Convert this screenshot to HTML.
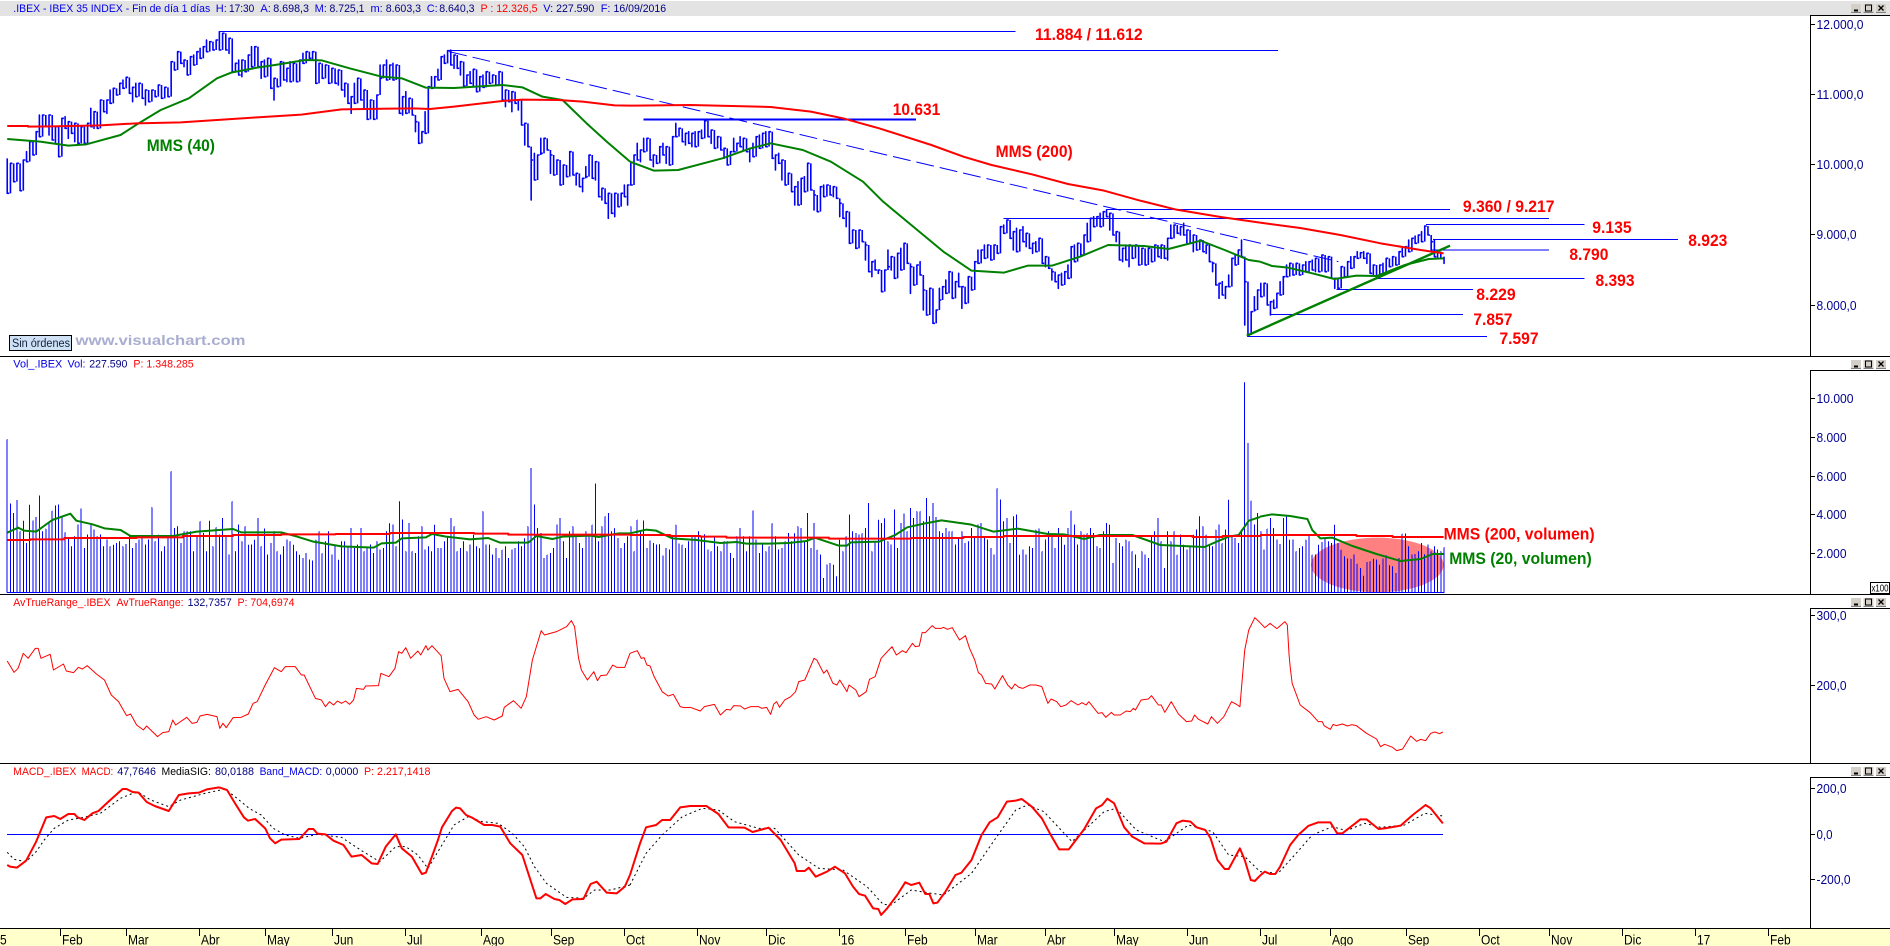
<!DOCTYPE html>
<html><head><meta charset="utf-8"><title>IBEX 35</title>
<style>
html,body{margin:0;padding:0;background:#fff}
svg{display:block}
path,polyline{fill:none;vector-effect:non-scaling-stroke;stroke-linejoin:round}
text{font-family:"Liberation Sans",Arial,sans-serif}
.t text,text.t{font-size:11px}
.b{fill:#0000e8}.n{fill:#000080}.r{fill:#ff0000}.k{fill:#000}
.a text{font-size:17px;font-weight:bold}
.x text{font-size:13px;fill:#000090}
.d text{font-size:12px;fill:#000}
</style></head><body>
<svg xmlns="http://www.w3.org/2000/svg" width="1890" height="946" viewBox="0 0 1890 946">
<defs>
<g id="btn">
<rect x="0" y="0" width="10" height="9" fill="#d4d0c8"/><path d="M0 8.5H10" stroke="#808080"/><path d="M3 6.5H7" stroke="#000" stroke-width="2"/>
<rect x="12.5" y="0" width="10" height="9" fill="#d4d0c8"/><path d="M12.5 8.5H22.5" stroke="#808080"/><rect x="14.5" y="1" width="6" height="6" fill="none" stroke="#000"/>
<rect x="25" y="0" width="10" height="9" fill="#d4d0c8"/><path d="M25 8.5H35" stroke="#808080"/><path d="M27.5 1.5L32.5 6.5M32.5 1.5L27.5 6.5" stroke="#000" stroke-width="1.3"/>
</g>
</defs>
<rect width="1890" height="946" fill="#fff"/>
<rect x="0" y="1" width="1890" height="15" fill="#e3e3e3"/>
<rect x="1811" y="16" width="79" height="340" fill="#fff"/>

<!-- PRICE PANE -->
<g transform="scale(.40179,.33333)">
<path stroke="#00f" stroke-width="1.6" d="M18 475V475 580h5m3 0V570 490h5m3 0V490 545h5m3 0V545 490h5m3 0V490 572h5m3 0V520 480h5m3 0V455 485h5m3 0V465 425h5m3 0V425 465h5m3 0V425 395h5m3 0V345 410h5m3 0V400 345h5m3 0V345 380h5m3 0V405 345h5m3 0V370 420h5m3 0V430 380h5m3 0V400 470h5m3 0V410 355h5m3 0V350 385h5m3 0V415 365h5m3 0V370 400h5m3 0V425 370h5m3 0V390 430h5m3 0V430 380h5m3 0V380 430h5m3 0V400 370h5m3 0V325 380h5m3 0V385 335h5m3 0V345 385h5m3 0V345 300h5m3 0V300 335h5m3 0V340 300h5m3 0V270 310h5m3 0V290 265h5m3 0V270 285h5m3 0V280 250h5m3 0V240 265h5m3 0V260 232h5m3 0V240 280h5m3 0V305 262h5m3 0V250 290h5m3 0V270 250h5m3 0V265 295h5m3 0V315 270h5m3 0V270 305h5m3 0V295 270h5m3 0V270 290h5m3 0V280 255h5m3 0V255 295h5m3 0V295 262h5m3 0V265 290h5m3 0V265 185h5m3 0V185 210h5m3 0V210 155h5m3 0V155 190h5m3 0V200 180h5m3 0V180 225h5m3 0V200 170h5m3 0V165 195h5m3 0V190 155h5m3 0V145 175h5m3 0V150 140h5m3 0V120 155h5m3 0V155 125h5m3 0V125 150h5m3 0V145 120h5m3 0V95 150h5m3 0V150 100h5m3 0V110 150h5m3 0V160 115h5m3 0V155 215h5m3 0V215 190h5m3 0V180 225h5m3 0V230 180h5m3 0V180 215h5m3 0V205 165h5m3 0V140 200h5m3 0V175 140h5m3 0V145 200h5m3 0V235 185h5m3 0V180 230h5m3 0V230 175h5m3 0V235 265h5m3 0V300 235h5m3 0V240 260h5m3 0V245 185h5m3 0V195 240h5m3 0V245 205h5m3 0V185 245h5m3 0V240 190h5m3 0V190 245h5m3 0V245 180h5m3 0V160 190h5m3 0V190 155h5m3 0V155 175h5m3 0V180 155h5m3 0V210 250h5m3 0V250 190h5m3 0V195 235h5m3 0V230 195h5m3 0V210 250h5m3 0V250 205h5m3 0V205 250h5m3 0V255 210h5m3 0V220 270h5m3 0V290 250h5m3 0V265 310h5m3 0V340 290h5m3 0V250 310h5m3 0V290 235h5m3 0V250 300h5m3 0V325 270h5m3 0V295 358h5m3 0V325 300h5m3 0V300 358h5m3 0V320 285h5m3 0V195 235h5m3 0V235 195h5m3 0V180 240h5m3 0V230 195h5m3 0V190 240h5m3 0V235 195h5m3 0V240 340h5m3 0V345 290h5m3 0V275 340h5m3 0V340 295h5m3 0V320 345h5m3 0V395 365h5m3 0V370 430h5m3 0V430 395h5m3 0V335 400h5m3 0V305 260h5m3 0V230 265h5m3 0V255 230h5m3 0V208 240h5m3 0V205 170h5m3 0V165 190h5m3 0V190 152h5m3 0V150 195h5m3 0V205 165h5m3 0V170 205h5m3 0V225 185h5m3 0V225 258h5m3 0V255 225h5m3 0V215 250h5m3 0V260 208h5m3 0V240 275h5m3 0V262 230h5m3 0V225 262h5m3 0V255 215h5m3 0V215 250h5m3 0V250 225h5m3 0V230 255h5m3 0V255 215h5m3 0V225 300h5m3 0V320 270h5m3 0V275 305h5m3 0V335 275h5m3 0V285 310h5m3 0V330 300h5m3 0V320 375h5m3 0V435 370h5m3 0V435 440h5m3 0V600 480h5m3 0V460 540h5m3 0V520 465h5m3 0V415 460h5m3 0V445 415h5m3 0V430 450h5m3 0V520 465h5m3 0V475 525h5m3 0V510 480h5m3 0V505 555h5m3 0V540 495h5m3 0V495 530h5m3 0V490 455h5m3 0V490 525h5m3 0V555 520h5m3 0V530 560h5m3 0V575 535h5m3 0V500 530h5m3 0V505 465h5m3 0V480 535h5m3 0V540 485h5m3 0V520 590h5m3 0V600 565h5m3 0V590 610h5m3 0V655 580h5m3 0V580 640h5m3 0V650 580h5m3 0V590 620h5m3 0V600 580h5m3 0V555 590h5m3 0V615 555h5m3 0V490 555h5m3 0V520 465h5m3 0V430 480h5m3 0V485 450h5m3 0V415 455h5m3 0V450 415h5m3 0V440 480h5m3 0V500 465h5m3 0V465 490h5m3 0V470 440h5m3 0V430 465h5m3 0V490 440h5m3 0V455 495h5m3 0V475 410h5m3 0V370 410h5m3 0V410 385h5m3 0V395 425h5m3 0V435 400h5m3 0V395 430h5m3 0V440 400h5m3 0V395 440h5m3 0V420 395h5m3 0V390 415h5m3 0V400 362h5m3 0V385 410h5m3 0V430 390h5m3 0V410 445h5m3 0V440 410h5m3 0V410 450h5m3 0V475 445h5m3 0V450 495h5m3 0V490 455h5m3 0V415 455h5m3 0V450 430h5m3 0V410 440h5m3 0V450 415h5m3 0V430 455h5m3 0V485 445h5m3 0V430 470h5m3 0V460 410h5m3 0V405 445h5m3 0V435 400h5m3 0V395 440h5m3 0V430 395h5m3 0V395 475h5m3 0V510 465h5m3 0V460 490h5m3 0V540 480h5m3 0V510 555h5m3 0V555 520h5m3 0V535 575h5m3 0V615 560h5m3 0V545 615h5m3 0V570 535h5m3 0V530 575h5m3 0V550 490h5m3 0V550 570h5m3 0V630 585h5m3 0V605 635h5m3 0V600 560h5m3 0V555 590h5m3 0V580 555h5m3 0V560 585h5m3 0V590 560h5m3 0V575 595h5m3 0V650 610h5m3 0V625 655h5m3 0V680 635h5m3 0V680 730h5m3 0V730 690h5m3 0V700 745h5m3 0V735 690h5m3 0V690 725h5m3 0V780 735h5m3 0V745 815h5m3 0V830 785h5m3 0V780 810h5m3 0V820 810h5m3 0V820 875h5m3 0V860 810h5m3 0V750 800h5m3 0V810 770h5m3 0V770 835h5m3 0V820 760h5m3 0V745 810h5m3 0V775 730h5m3 0V745 790h5m3 0V880 800h5m3 0V815 855h5m3 0V840 795h5m3 0V785 825h5m3 0V930 870h5m3 0V875 945h5m3 0V900 865h5m3 0V905 970h5m3 0V970 930h5m3 0V865 900h5m3 0V900 860h5m3 0V840 880h5m3 0V860 815h5m3 0V845 895h5m3 0V865 845h5m3 0V820 860h5m3 0V925 860h5m3 0V860 910h5m3 0V870 830h5m3 0V830 870h5m3 0V830 785h5m3 0V750 790h5m3 0V775 750h5m3 0V735 775h5m3 0V775 735h5m3 0V740 780h5m3 0V775 735h5m3 0V735 760h5m3 0V725 680h5m3 0V675 700h5m3 0V690 660h5m3 0V695 715h5m3 0V750 695h5m3 0V685 755h5m3 0V720 690h5m3 0V680 725h5m3 0V740 700h5m3 0V705 745h5m3 0V760 730h5m3 0V725 755h5m3 0V755 715h5m3 0V760 790h5m3 0V800 770h5m3 0V770 805h5m3 0V840 815h5m3 0V825 845h5m3 0V865 825h5m3 0V820 855h5m3 0V845 815h5m3 0V795 835h5m3 0V795 740h5m3 0V735 785h5m3 0V765 730h5m3 0V730 765h5m3 0V755 705h5m3 0V670 725h5m3 0V685 655h5m3 0V650 680h5m3 0V680 650h5m3 0V640 680h5m3 0V665 635h5m3 0V630 650h5m3 0V690 640h5m3 0V680 705h5m3 0V725 695h5m3 0V700 780h5m3 0V785 745h5m3 0V735 780h5m3 0V800 735h5m3 0V745 775h5m3 0V775 735h5m3 0V745 795h5m3 0V795 745h5m3 0V750 795h5m3 0V795 745h5m3 0V745 785h5m3 0V780 735h5m3 0V740 770h5m3 0V775 735h5m3 0V745 775h5m3 0V780 715h5m3 0V675 715h5m3 0V710 675h5m3 0V675 700h5m3 0V705 680h5m3 0V670 705h5m3 0V730 690h5m3 0V695 730h5m3 0V755 705h5m3 0V710 750h5m3 0V745 720h5m3 0V735 755h5m3 0V760 735h5m3 0V755 785h5m3 0V815 790h5m3 0V825 855h5m3 0V895 850h5m3 0V845 885h5m3 0V895 860h5m3 0V825 860h5m3 0V795 775h5m3 0V765 795h5m3 0V790 750h5m3 0V720 770h5m3 0V975 845h5m3 0V955 1005h5m3 0V980 935h5m3 0V890 930h5m3 0V920 870h5m3 0V850 890h5m3 0V865 850h5m3 0V870 915h5m3 0V945 905h5m3 0V900 925h5m3 0V925 880h5m3 0V845 885h5m3 0V855 830h5m3 0V795 830h5m3 0V825 790h5m3 0V795 825h5m3 0V825 790h5m3 0V790 825h5m3 0V825 795h5m3 0V785 815h5m3 0V810 785h5m3 0V780 810h5m3 0V815 775h5m3 0V790 815h5m3 0V800 765h5m3 0V775 815h5m3 0V815 770h5m3 0V770 835h5m3 0V865 835h5m3 0V840 865h5m3 0V860 800h5m3 0V800 830h5m3 0V810 785h5m3 0V770 805h5m3 0V795 770h5m3 0V755 775h5m3 0V770 758h5m3 0V755 775h5m3 0V790 760h5m3 0V790 820h5m3 0V825 795h5m3 0V810 835h5m3 0V830 795h5m3 0V790 825h5m3 0V815 775h5m3 0V780 800h5m3 0V800 770h5m3 0V770 795h5m3 0V785 755h5m3 0V745 770h5m3 0V760 740h5m3 0V720 755h5m3 0V745 715h5m3 0V708 730h5m3 0V730 705h5m3 0V695 725h5m3 0V695 678h5m3 0V690 705h5m3 0V755 725h5m3 0V720 770h5m3 0V775 755h5m3 0V760 775h5m3 0V790 770"/>
<path stroke="#00f" stroke-width="1" shape-rendering="crispEdges" d="M548 94H2528M1118 151H3181M2753 628H3609M2498 655H3855M3549 673H3944M3566 718H4176M3561 750H3855M3426 835H3944M3326 868H3666M3161 943H3641M3103 1009H3701"/>
<path stroke="#00f" stroke-width="2" shape-rendering="crispEdges" d="M1601 359H2280"/>
<path stroke="#00f" stroke-width="1" stroke-dasharray="18 6" d="M1118 155L3331 785"/>
<path stroke="#008000" stroke-width="2.4" d="M3103 1007L3609 737"/>
<path stroke="#008000" stroke-width="2" d="M18 417L100 425 170 437 215 433 300 405 345 370 400 330 470 295 540 235 575 218 640 203 690 194 760 180 800 181 870 205 950 230 1000 235 1060 263 1130 264 1250 255 1300 262 1350 290 1400 300 1460 370 1510 425 1568 485"/>
<path transform="translate(1568 0)" stroke="#008000" stroke-width="2" d="M0 485L60 512 120 510 230 475 300 445 350 430 430 450 500 485 580 545 630 605 700 675 780 755 850 812 930 818 990 797 1050 797 1120 770 1190 735 1280 738 1340 747 1420 722 1480 750 1540 780 1568 785"/>
<path transform="translate(3136 0)" stroke="#008000" stroke-width="2" d="M0 785L30 798 70 803 130 820 185 837 240 827 290 828 360 795 420 777 457 775"/>
<path stroke="#f00" stroke-width="2" d="M18 378L70 378 70 380 130 379 250 376 340 370 450 367 540 360 640 352 750 344 850 328 1030 325 1070 327 1130 320 1250 303 1300 299 1390 300 1450 305 1530 316 1568 317"/>
<path transform="translate(1568 0)" stroke="#f00" stroke-width="2" d="M0 317L150 315 350 321 450 335 530 355 620 385 750 435 830 470 900 495 1000 523 1090 552 1180 572 1270 602 1360 629 1470 651 1568 668"/>
<path transform="translate(3136 0)" stroke="#f00" stroke-width="2" d="M0 668L100 684 200 705 300 730 400 750 457 760"/>
</g>

<!-- VOLUME PANE -->
<g transform="translate(0,355) scale(.40179,.33333)">
<ellipse transform="translate(3136 0)" cx="292" cy="630" rx="165" ry="82" fill="#ff8080"/>
<path stroke="#00f" stroke-width="1" shape-rendering="crispEdges" d="M18 713V253 713h8V447 713h8V475 713h8V436 713h8V530 713h8V498 713h8V565 713h8V450 713h8V498 713h8V487 713h8V423 713h8V530 713h8V522 713h8V500 713h8V468 713h8V453 713h8V450 713h8V485 713h8V533 713h8V550 713h8V575 713h8V545 713h8V510 713h8V462 713h8V580 713h8V540 713h8V510 713h8V525 713h8V545 713h8V540 713h8V575 713h8V555 713h8V575 713h8V570 713h8V565 713h8V560 713h8V575 713h8V568 713h8V540 713h8V580 713h8V565 713h8V555 713h8V545 713h8V570 713h8V555 713h8V458 713h8V560 713h8V540 713h8V590 713h8V575 713h8V545 713h8V350 713h8V520 713h8V515 713h8V565 713h8V530 713h8V530 713h8V530 713h8V590 713h8V545 713h8V500 713h8V535 713h8V590 713h8V498 713h8V575 713h8V518 713h8V540 713h8V490 713h8V545 713h8V600 713h8V440 713h8V590 713h8V510 713h8V560 713h8V515 713h8V570 713h8V570 713h8V555 713h8V490 713h8V575 713h8V522 713h8V600 713h8V565 713h8V530 713h8V590 713h8V600 713h8V575 713h8V555 713h8V560 713h8V570 713h8V590 713h8V600 713h8V610 713h8V595 713h8V615 713h8V618 713h8V555 713h8V530 713h8V595 713h8V560 713h8V530 713h8V600 713h8V570 713h8V615 713h8V560 713h8V560 713h8V575 713h8V520 713h8V580 713h8V570 713h8V520 713h8V590 713h8V580 713h8V570 713h8V595 713h8V560 713h8V585 713h8V580 713h8V530 713h8V505 713h8V510 713h8V575 713h8V440 713h8V495 713h8V590 713h8V505 713h8V590 713h8V595 713h8V545 713h8V515 713h8V585 713h8V575 713h8V590 713h8V510 713h8V580 713h8V580 713h8V560 713h8V545 713h8V490 713h8V515 713h8V590 713h8V580 713h8V560 713h8V590 713h8V570 713h8V540 713h8V575 713h8V580 713h8V470 713h8V570 713h8V570 713h8V600 713h8V580 713h8V610 713h8V585 713h8V575 713h8V610 713h8V585 713h8V580 713h8V560 713h8V575 713h8V550 713h8V515 713h8V340 713h8V450 713h8V520 713h8V535 713h8V610 713h8V600 713h8V595 713h8V580 713h8V510 713h8V490 713h8V560 713h8V610 713h8V530 713h8V515 713h8V545 713h8V565 713h8V580 713h8V530 713h8V545 713h8V510 713h8V387 713h8V560 713h8V515 713h8V485 713h8V475 713h8V530 713h8V520 713h8V550 713h8V580 713h8V565 713h8V545 713h8V515 713h8V590 713h8V495 713h8V530 713h8V498 713h8V580 713h8V558 713h8V565 713h8V570 713h8V568 713h8V603 713h8V580 713h8V585 713h8V545 713h8V510 713h8V567 713h8V570 713h8V580 713h8V560 713h8V545 713h8V545 713h8V530 713h8V545 713h8V538 713h8V585 713h8V590 713h8V545 713h8V575 713h8V590 713h8V560 713h8V560 713h8V595 713h8V610 713h8V545 713h8V520 713h8V545 713h8V590 713h8V545 713h8V468 713h8V555 713h8V595 713h8V565 713h8V590 713h8V575 713h8V505 713h8V545 713h8V585 713h8V580 713h8V560 713h8V535 713h8V560 713h8V535 713h8V515 713h8V520 713h8V560 713h8V475 713h8V580 713h8V505 713h8V585 713h8V600 713h8V670 713h8V630 713h8V625 713h8V630 713h8V665 713h8V555 713h8V590 713h8V545 713h8V480 713h8V530 713h8V535 713h8V540 713h8V535 713h8V520 713h8V445 713h8V590 713h8V560 713h8V495 713h8V505 713h8V490 713h8V560 713h8V570 713h8V465 713h8V580 713h8V505 713h8V477 713h8V530 713h8V460 713h8V490 713h8V470 713h8V470 713h8V500 713h8V430 713h8V485 713h8V445 713h8V487 713h8V530 713h8V535 713h8V520 713h8V530 713h8V530 713h8V570 713h8V550 713h8V530 713h8V565 713h8V560 713h8V520 713h8V545 713h8V510 713h8V505 713h8V550 713h8V555 713h8V580 713h8V600 713h8V400 713h8V435 713h8V500 713h8V490 713h8V565 713h8V485 713h8V480 713h8V600 713h8V585 713h8V600 713h8V575 713h8V580 713h8V525 713h8V522 713h8V590 713h8V555 713h8V530 713h8V540 713h8V580 713h8V520 713h8V540 713h8V570 713h8V520 713h8V468 713h8V510 713h8V570 713h8V530 713h8V540 713h8V535 713h8V520 713h8V535 713h8V575 713h8V580 713h8V530 713h8V505 713h8V510 713h8V625 713h8V550 713h8V565 713h8V575 713h8V555 713h8V560 713h8V590 713h8V600 713h8V640 713h8V590 713h8V600 713h8V610 713h8V545 713h8V530 713h8V490 713h8V560 713h8V640 713h8V530 713h8V560 713h8V530 713h8V600 713h8V540 713h8V570 713h8V585 713h8V575 713h8V540 713h8V525 713h8V485 713h8V515 713h8V540 713h8V570 713h8V575 713h8V525 713h8V510 713h8V565 713h8V525 713h8V435 713h8V545 713h8V550 713h8V565 713h8V525 713h8V82 713h8V265 713h8V438 713h8V510 713h8V475 713h8V530 713h8V585 713h8V522 713h8V490 713h8V520 713h8V555 713h8V568 713h8V490 713h8V485 713h8V555 713h8V555 713h8V590 713h8V580 713h8V575 713h8V555 713h8V540 713h8V600 713h8V600 713h8V570 713h8V562 713h8V550 713h8V560 713h8V565 713h8V510 713h8V565 713h8V585 713h8V605 713h8V612 713h8V612 713h8V600 713h8V627 713h8V640 713h8V663 713h8V622 713h8V620 713h8V612 713h8V615 713h8V630 713h8V612 713h8V602 713h8V632 713h8V635 713h8V655 713h8V610 713h8V537 713h8V537 713h8V575 713h8V600 713h8V598 713h8V590 713h8V565 713h8V598 713h8V570 713h8V590 713h8V575 713h8V585 713h8V590 713h8V578 713"/>
<path stroke="#00f" stroke-width="1" shape-rendering="crispEdges" d="M18 713H3593"/>
<path stroke="#008000" stroke-width="2" d="M18 533L45 518 60 527 90 530 130 495 175 476 190 497 230 508 260 520 300 525 325 543 430 543 490 530 580 522 600 532 700 532 740 545 780 560 850 574 930 578 950 565 985 563 1000 550 1060 547 1075 537 1110 545 1170 553 1215 549 1245 563 1315 563 1335 543 1375 552 1400 545 1470 542 1490 546 1540 535 1568 535"/>
<path transform="translate(1568 0)" stroke="#008000" stroke-width="2" d="M0 535L40 524 65 527 105 550 165 555 225 564 265 561 290 566 345 566 395 564 440 558 460 548 520 572 540 572 550 562 620 560 660 540 690 517 735 505 775 496 850 509 905 530 965 521 1040 537 1080 538 1130 552 1170 540 1250 540 1320 570 1430 576 1460 560 1490 545 1515 540 1540 497 1568 486"/>
<path transform="translate(3136 0)" stroke="#008000" stroke-width="2" d="M0 485L30 478 75 483 118 492 130 525 150 550 180 548 230 573 290 597 350 618 400 612 430 597 457 597"/>
<path stroke="#f00" stroke-width="2" d="M18 555H75V553H160V549H340V547H455V543H580V540H700V538H835V537H970V534H1180V536H1265V539H1568V540"/>
<path transform="translate(1568 0)" stroke="#f00" stroke-width="2" d="M0 540H100V543H175V545H240V548H495V551H700V549H830V546H930V543H1400V546H1475V543H1568V540"/>
<path transform="translate(3136 0)" stroke="#f00" stroke-width="2" d="M0 540H240V543H330V546H457"/>
</g>

<!-- ATR + MACD -->
<g transform="translate(0,590) scale(.40179,.33333)">
<path stroke="#f00" stroke-width="1" d="M18 213L35 247 45 235 58 190 70 205 88 175 95 175 102 205 125 193 133 240 158 222 165 243 183 248 195 232 205 237 217 227 240 252 260 270 277 315 295 335 315 377 325 372 340 405 357 420 365 408 392 440 405 428 420 425 430 390 437 405 465 382 478 400 490 397 498 378 515 373 540 380 547 415 555 400 563 413 580 383 600 382 618 372 630 340 640 335 660 285 683 233 700 245 710 230 735 230 750 255 757 255 785 325 800 330 810 350 820 335 830 345 840 333 850 340 860 333 870 343 880 330 887 295 905 298 910 288 942 287 948 250 968 260 983 235 992 185 1000 190 1010 173 1022 205 1040 183 1047 195 1060 167 1065 180 1075 167 1098 197 1105 265 1120 305 1140 298 1165 335 1180 375 1190 388 1210 380 1230 390 1250 378 1255 352 1278 332 1297 355 1310 320 1325 210 1347 122 1355 135 1385 125 1410 110 1422 92 1430 110 1440 205 1447 240 1462 270 1478 245 1487 272 1495 257 1510 255 1525 225 1535 232 1555 232 1568 190"/>
<path transform="translate(1568 0)" stroke="#f00" stroke-width="1" d="M0 190L18 182 28 205 35 203 42 225 50 228 60 260 80 305 95 318 108 313 125 350 135 353 150 352 175 363 185 350 210 343 225 375 240 358 250 360 258 347 275 348 285 357 300 350 320 350 328 355 340 352 350 373 358 342 365 335 372 352 385 330 400 320 412 305 420 275 435 270 458 205 465 210 482 250 490 240 505 280 515 285 522 270 540 305 545 285 562 300 570 320 588 305 596 268 610 260 625 205 652 170 663 195 678 182 687 188 703 160 710 170 720 168 727 128 735 128 752 107 760 115 775 115 780 112 790 118 802 113 820 150 835 137 845 175 858 210 867 248 875 255 885 280 900 282 908 297 927 257 940 285 950 297 958 282 968 292 978 295 995 285 1010 285 1025 290 1040 340 1048 327 1062 335 1072 350 1085 345 1098 332 1115 345 1125 338 1135 345 1142 335 1165 370 1175 368 1184 382 1198 367 1205 375 1220 375 1235 363 1245 365 1253 355 1258 360 1272 330 1290 327 1298 317 1315 345 1322 345 1331 367 1347 335 1365 372 1385 395 1398 393 1405 375 1415 388 1438 402 1447 380 1462 400 1478 380 1497 335 1508 342 1518 350 1525 250 1530 180 1540 120 1555 83 1568 98"/>
<path transform="translate(3136 0)" stroke="#f00" stroke-width="1" d="M0 98L12 113 25 100 42 116 62 95 68 105 72 190 75 230 80 280 100 345 125 368 145 395 155 395 160 408 175 418 182 403 190 407 205 402 218 408 228 404 240 407 265 430 290 447 300 470 310 463 330 472 340 482 355 477 375 438 390 454 400 448 412 452 425 430 435 426 447 431 455 426"/>
<path stroke="#00f" stroke-width="1" shape-rendering="crispEdges" d="M18 733H3591"/>
<path stroke="#000" stroke-width="1" stroke-dasharray="2 3" d="M18 787L35 808 65 815 90 785 110 750 135 715 170 690 205 683 250 670 300 625 330 610 345 607 375 630 420 650 450 630 510 610 560 597 590 625 620 655 650 675 680 715 710 735 745 745 790 733 850 742 900 782 945 815 985 770 1010 770 1040 795 1065 835 1085 795 1130 705 1165 680 1200 695 1240 700 1275 730 1305 770 1330 830 1360 880 1410 922 1452 925 1480 900 1520 900 1568 885"/>
<path transform="translate(1568 0)" stroke="#000" stroke-width="1" stroke-dasharray="2 3" d="M0 885L40 790 80 735 130 680 180 655 220 660 260 695 320 715 360 715 420 795 470 835 530 840 590 890 630 943 650 945 700 900 750 910 780 915 850 850 910 745 960 660 990 645 1030 665 1100 755 1180 665 1210 655 1260 720 1330 755 1390 705 1450 725 1490 795 1530 800 1568 845"/>
<path transform="translate(3136 0)" stroke="#000" stroke-width="1" stroke-dasharray="2 3" d="M0 845L45 850 90 790 130 735 180 710 215 722 260 700 300 712 360 705 410 670 455 678"/>
<path stroke="#f00" stroke-width="2" d="M18 825L25 830 42 833 65 812 90 755 115 682 135 678 150 687 170 672 185 672 193 682 210 690 230 670 245 663 270 635 305 597 315 597 330 606 345 608 365 636 385 648 420 663 445 615 470 610 495 608 515 598 545 592 565 600 585 640 607 682 617 692 635 687 660 715 672 745 685 760 700 749 745 747 768 717 780 717 790 731 810 733 830 752 855 765 875 800 900 795 925 820 940 822 960 770 985 733 1000 775 1025 800 1050 852 1060 848 1075 800 1090 750 1100 712 1125 663 1135 653 1145 655 1160 675 1175 683 1205 705 1225 705 1245 710 1270 760 1300 795 1335 925 1345 925 1358 912 1380 927 1392 930 1407 942 1425 928 1452 927 1470 882 1485 875 1510 908 1535 910 1555 890 1568 855"/>
<path transform="translate(1568 0)" stroke="#f00" stroke-width="2" d="M0 855L25 760 40 712 65 705 80 690 100 690 125 652 150 648 190 648 220 672 245 712 285 713 305 726 345 713 375 750 410 820 415 843 435 843 445 833 462 860 490 845 510 830 535 850 555 890 570 912 585 917 605 955 618 957 625 975 640 955 665 915 685 877 700 885 720 878 735 912 745 912 755 940 765 938 785 905 810 855 825 848 850 810 875 735 895 697 915 682 938 635 960 632 975 627 1000 650 1025 685 1045 730 1068 778 1092 778 1130 718 1160 655 1175 645 1188 626 1205 640 1230 712 1250 740 1280 760 1320 761 1335 755 1360 700 1375 692 1395 695 1410 712 1432 720 1445 745 1462 810 1480 837 1490 837 1518 775 1530 810 1545 870 1555 873 1568 857"/>
<path transform="translate(3136 0)" stroke="#f00" stroke-width="2" d="M0 857L12 845 25 852 38 852 50 830 75 765 95 735 120 708 145 697 175 697 192 730 205 730 250 688 265 688 295 717 310 715 350 707 380 675 412 645 425 655 455 700"/>
</g>

<!-- FRAME LINES -->
<rect x="0" y="929" width="1890" height="17" fill="#ffffcc"/>
<path stroke="#000" stroke-width="1" shape-rendering="crispEdges" d="M0 356.5H1890M0 594.5H1890M0 763.5H1890M0 928.5H1890M1810.5 16V356M1810.5 371V594M1810.5 609V763M1810.5 778V928M1810 15.5H1890M1810 370.5H1890M1810 608.5H1890M1810 777.5H1890"/>
<path stroke="#000" stroke-width="1" shape-rendering="crispEdges" d="M1810 24.5H1815M1810 94.5H1815M1810 164.5H1815M1810 234.5H1815M1810 305.5H1815M1810 398.5H1815M1810 437.5H1815M1810 476.5H1815M1810 514.5H1815M1810 553.5H1815M1810 615.5H1815M1810 685.5H1815M1810 788.5H1815M1810 834.5H1815M1810 879.5H1815"/>
<use href="#btn" x="1851" y="4"/><use href="#btn" x="1851" y="360"/><use href="#btn" x="1851" y="598"/><use href="#btn" x="1851" y="767"/>
<rect x="1870.5" y="582.5" width="19" height="11" fill="#fff" stroke="#000"/>
<text x="1871.5" y="591.5" font-size="10" class="k" textLength="17" lengthAdjust="spacingAndGlyphs">x100</text>

<!-- TITLES -->
<g class="t">
<text x="13.3" y="12" class="b" textLength="196.9" lengthAdjust="spacingAndGlyphs">.IBEX - IBEX 35 INDEX - Fin de día 1 días</text>
<text x="215.8" y="12" class="b">H:</text><text x="229" y="12" class="n" textLength="25.3" lengthAdjust="spacingAndGlyphs">17:30</text>
<text x="260.4" y="12" class="b">A:</text><text x="273.2" y="12" class="n" textLength="35.8" lengthAdjust="spacingAndGlyphs">8.698,3</text>
<text x="314.6" y="12" class="b">M:</text><text x="329.5" y="12" class="n" textLength="35" lengthAdjust="spacingAndGlyphs">8.725,1</text>
<text x="370.5" y="12" class="b">m:</text><text x="385.7" y="12" class="n" textLength="35.4" lengthAdjust="spacingAndGlyphs">8.603,3</text>
<text x="426.7" y="12" class="b">C:</text><text x="439.2" y="12" class="n" textLength="35.4" lengthAdjust="spacingAndGlyphs">8.640,3</text>
<text x="480.5" y="12" class="r" textLength="57" lengthAdjust="spacingAndGlyphs">P : 12.326,5</text>
<text x="543.2" y="12" class="b">V:</text><text x="556.1" y="12" class="n" textLength="38.2" lengthAdjust="spacingAndGlyphs">227.590</text>
<text x="600.7" y="12" class="b">F:</text><text x="613.5" y="12" class="n" textLength="52.6" lengthAdjust="spacingAndGlyphs">16/09/2016</text>

<text x="13.3" y="367.5" class="b" textLength="49" lengthAdjust="spacingAndGlyphs">Vol_.IBEX</text>
<text x="67.5" y="367.5" class="b" textLength="18" lengthAdjust="spacingAndGlyphs">Vol:</text>
<text x="89.2" y="367.5" class="n" textLength="38.2" lengthAdjust="spacingAndGlyphs">227.590</text>
<text x="133.4" y="367.5" class="r" textLength="60.3" lengthAdjust="spacingAndGlyphs">P: 1.348.285</text>

<text x="13.3" y="606" class="r" textLength="97.2" lengthAdjust="spacingAndGlyphs">AvTrueRange_.IBEX</text>
<text x="116.5" y="606" class="r" textLength="67.1" lengthAdjust="spacingAndGlyphs">AvTrueRange:</text>
<text x="187.6" y="606" class="n" textLength="44.2" lengthAdjust="spacingAndGlyphs">132,7357</text>
<text x="237.5" y="606" class="r" textLength="57" lengthAdjust="spacingAndGlyphs">P: 704,6974</text>

<text x="13.3" y="775" class="r" textLength="63" lengthAdjust="spacingAndGlyphs">MACD_.IBEX</text>
<text x="81.6" y="775" class="r" textLength="31.7" lengthAdjust="spacingAndGlyphs">MACD:</text>
<text x="117.3" y="775" class="n" textLength="38.6" lengthAdjust="spacingAndGlyphs">47,7646</text>
<text x="161.5" y="775" class="k" textLength="49.4" lengthAdjust="spacingAndGlyphs">MediaSIG:</text>
<text x="215" y="775" class="n" textLength="39" lengthAdjust="spacingAndGlyphs">80,0188</text>
<text x="259.6" y="775" class="b" textLength="62.7" lengthAdjust="spacingAndGlyphs">Band_MACD:</text>
<text x="325.8" y="775" class="n" textLength="32.5" lengthAdjust="spacingAndGlyphs">0,0000</text>
<text x="364" y="775" class="r" textLength="66.4" lengthAdjust="spacingAndGlyphs">P: 2.217,1418</text>
</g>

<!-- SIN ORDENES -->
<rect x="9.5" y="335.5" width="62" height="15" fill="#cfe1f5" stroke="#000"/>
<text x="12" y="347" font-size="11.5" fill="#10203a" textLength="58" lengthAdjust="spacingAndGlyphs">Sin órdenes</text>
<text x="75.5" y="345" font-size="14" font-weight="bold" fill="#a9add0" textLength="170" lengthAdjust="spacingAndGlyphs">www.visualchart.com</text>

<!-- ANNOTATIONS -->
<g class="a" fill="#ff0000">
<text x="1035" y="40" textLength="107.7" lengthAdjust="spacingAndGlyphs">11.884 / 11.612</text>
<text x="892.8" y="115" textLength="47.4" lengthAdjust="spacingAndGlyphs">10.631</text>
<text x="995.6" y="157" textLength="77.1" lengthAdjust="spacingAndGlyphs">MMS (200)</text>
<text x="146.7" y="151" fill="#008000" textLength="68.3" lengthAdjust="spacingAndGlyphs">MMS (40)</text>
<text x="1462.9" y="212" textLength="91.6" lengthAdjust="spacingAndGlyphs">9.360 / 9.217</text>
<text x="1592.3" y="233" textLength="39.4" lengthAdjust="spacingAndGlyphs">9.135</text>
<text x="1688.3" y="246" textLength="39" lengthAdjust="spacingAndGlyphs">8.923</text>
<text x="1569.4" y="260" textLength="39" lengthAdjust="spacingAndGlyphs">8.790</text>
<text x="1595.5" y="286" textLength="39" lengthAdjust="spacingAndGlyphs">8.393</text>
<text x="1476.2" y="300" textLength="39.4" lengthAdjust="spacingAndGlyphs">8.229</text>
<text x="1473.4" y="325" textLength="39" lengthAdjust="spacingAndGlyphs">7.857</text>
<text x="1499.5" y="344" textLength="39" lengthAdjust="spacingAndGlyphs">7.597</text>
<text x="1443.6" y="539.5" textLength="151" lengthAdjust="spacingAndGlyphs">MMS (200, volumen)</text>
<text x="1449.2" y="564" fill="#008000" textLength="142.6" lengthAdjust="spacingAndGlyphs">MMS (20, volumen)</text>
</g>

<!-- AXIS LABELS -->
<g class="x">
<text x="1816.5" y="29" textLength="47" lengthAdjust="spacingAndGlyphs">12.000,0</text>
<text x="1816.5" y="99" textLength="47" lengthAdjust="spacingAndGlyphs">11.000,0</text>
<text x="1816.5" y="169" textLength="47" lengthAdjust="spacingAndGlyphs">10.000,0</text>
<text x="1816.5" y="239" textLength="40" lengthAdjust="spacingAndGlyphs">9.000,0</text>
<text x="1816.5" y="310" textLength="40" lengthAdjust="spacingAndGlyphs">8.000,0</text>
<text x="1816.5" y="403" textLength="37" lengthAdjust="spacingAndGlyphs">10.000</text>
<text x="1816.5" y="442" textLength="30" lengthAdjust="spacingAndGlyphs">8.000</text>
<text x="1816.5" y="481" textLength="30" lengthAdjust="spacingAndGlyphs">6.000</text>
<text x="1816.5" y="519" textLength="30" lengthAdjust="spacingAndGlyphs">4.000</text>
<text x="1816.5" y="558" textLength="30" lengthAdjust="spacingAndGlyphs">2.000</text>
<text x="1816.5" y="620" textLength="30" lengthAdjust="spacingAndGlyphs">300,0</text>
<text x="1816.5" y="690" textLength="30" lengthAdjust="spacingAndGlyphs">200,0</text>
<text x="1816.5" y="793" textLength="30" lengthAdjust="spacingAndGlyphs">200,0</text>
<text x="1816.5" y="839" textLength="16" lengthAdjust="spacingAndGlyphs">0,0</text>
<text x="1816.5" y="884" textLength="34" lengthAdjust="spacingAndGlyphs">-200,0</text>
</g>

<!-- DATE AXIS -->
<path stroke="#000" stroke-width="1" shape-rendering="crispEdges" d="M60.5 929V936M126.5 929V936M199.5 929V936M265.5 929V936M332.5 929V936M405.5 929V936M481.5 929V936M551.5 929V936M624.5 929V936M697.5 929V936M766.5 929V936M839.5 929V936M905.5 929V936M975.5 929V936M1045.5 929V936M1114.5 929V936M1187.5 929V936M1260.5 929V936M1330.5 929V936M1406.5 929V936M1479.5 929V936M1549.5 929V936M1622.5 929V936M1695.5 929V936M1768.5 929V936"/>
<g class="d" transform="scale(1,1.12)">
<text x="0" y="843.3">5</text>
<text x="62" y="843.3">Feb</text><text x="128" y="843.3">Mar</text><text x="201" y="843.3">Abr</text><text x="267" y="843.3">May</text><text x="334" y="843.3">Jun</text><text x="407" y="843.3">Jul</text><text x="483" y="843.3">Ago</text><text x="553" y="843.3">Sep</text><text x="626" y="843.3">Oct</text>
<text x="699" y="843.3">Nov</text><text x="768" y="843.3">Dic</text><text x="841" y="843.3">16</text><text x="907" y="843.3">Feb</text><text x="977" y="843.3">Mar</text><text x="1047" y="843.3">Abr</text><text x="1116" y="843.3">May</text><text x="1189" y="843.3">Jun</text>
<text x="1262" y="843.3">Jul</text><text x="1332" y="843.3">Ago</text><text x="1408" y="843.3">Sep</text><text x="1481" y="843.3">Oct</text><text x="1551" y="843.3">Nov</text><text x="1624" y="843.3">Dic</text><text x="1697" y="843.3">17</text><text x="1770" y="843.3">Feb</text>
</g>
</svg>
</body></html>
